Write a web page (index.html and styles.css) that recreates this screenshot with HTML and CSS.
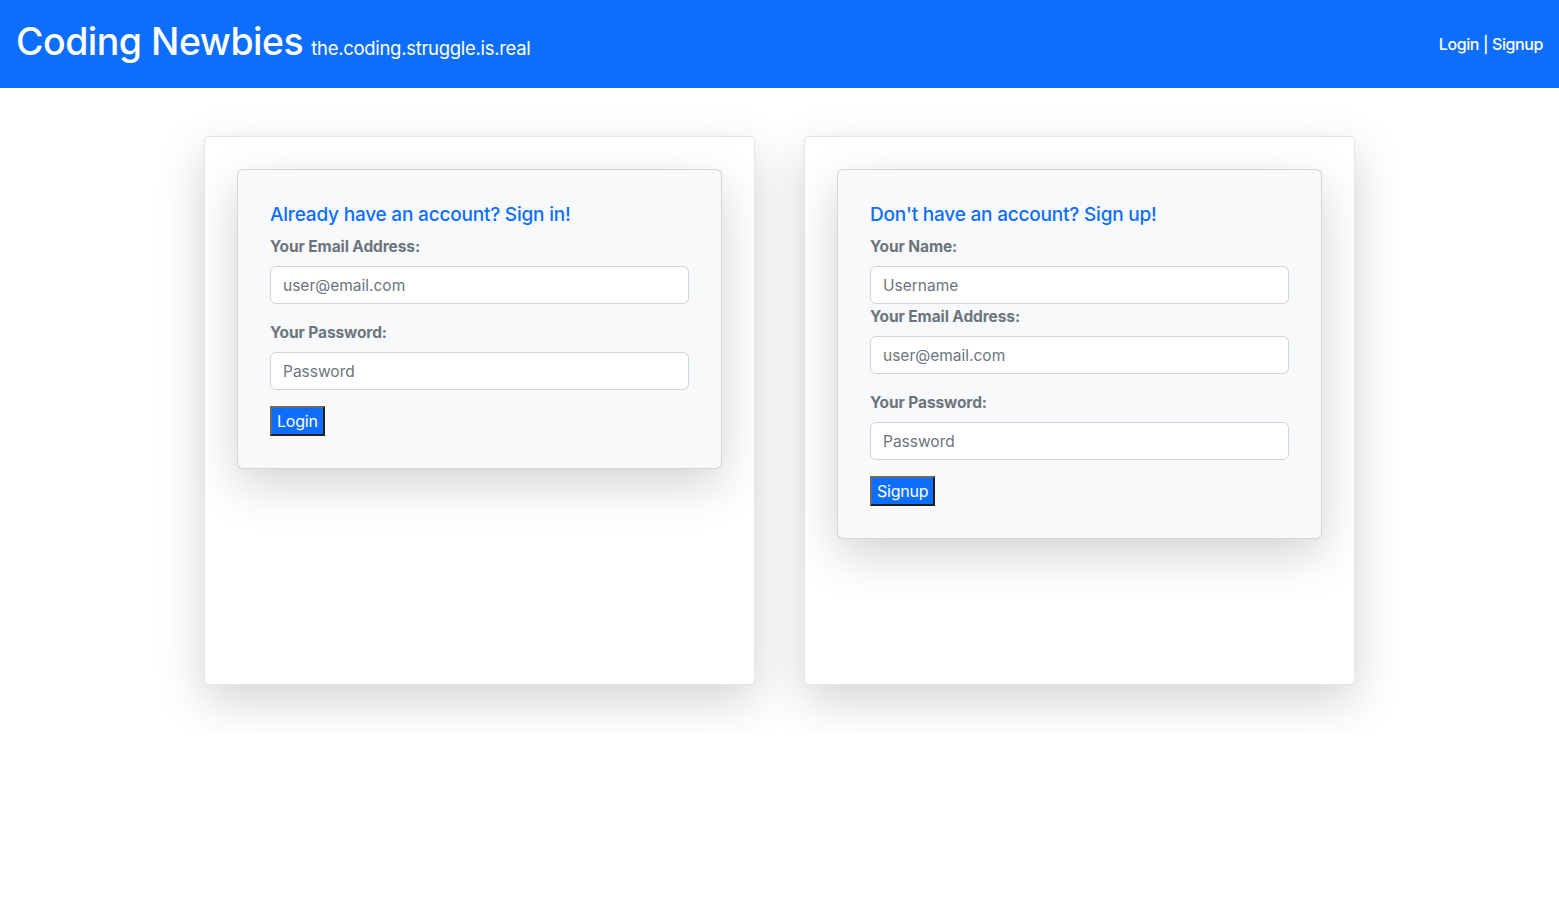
FILE: index.html
```html
<!DOCTYPE html>
<html lang="en">
<head>
<meta charset="utf-8">
<title>Coding Newbies</title>
<link rel="stylesheet" href="styles.css">
</head>
<body>
<header class="topbar">
  <div class="brand">
    <h1 class="brand-title">Coding Newbies</h1>
    <span class="brand-sub">the.coding.struggle.is.real</span>
  </div>
  <nav class="nav-links">
    <a href="#">Login</a> | <a href="#">Signup</a>
  </nav>
</header>
<main class="main">
  <div class="container">
    <section class="outer-card">
      <form class="inner-card">
        <h2 class="form-title">Already have an account? Sign in!</h2>
        <label class="label">Your Email Address:</label>
        <input class="input mb" type="email" placeholder="user@email.com">
        <label class="label">Your Password:</label>
        <input class="input mb" type="password" placeholder="Password">
        <button class="btn" type="button">Login</button>
      </form>
    </section>
    <section class="outer-card">
      <form class="inner-card">
        <h2 class="form-title">Don't have an account? Sign up!</h2>
        <label class="label">Your Name:</label>
        <input class="input" type="text" placeholder="Username">
        <label class="label">Your Email Address:</label>
        <input class="input mb" type="email" placeholder="user@email.com">
        <label class="label">Your Password:</label>
        <input class="input mb" type="password" placeholder="Password">
        <button class="btn" type="button">Signup</button>
      </form>
    </section>
  </div>
</main>
</body>
</html>
```
FILE: styles.css
```css
* { box-sizing: border-box; }
html, body { margin: 0; padding: 0; }
body {
  font-family: Inter, "Noto Sans", "Liberation Sans", sans-serif;
  font-size: 16px;
  line-height: 1.5;
  color: #212529;
  background: #fff;
}
.topbar {
  height: 88px;
  background: #0d6efd;
  color: #fff;
  display: flex;
  align-items: center;
  justify-content: space-between;
  padding: 0 16px;
}
.brand {
  display: flex;
  align-items: baseline;
  gap: 8px;
  margin-top: -6px;
}
.brand-title {
  margin: 0;
  font-size: 37.5px;
  font-weight: 500;
  line-height: 1.2;
  letter-spacing: -0.5px;
}
.brand-sub {
  font-size: 18.5px;
  font-weight: 400;
  letter-spacing: -0.3px;
}
.nav-links {
  font-size: 16px;
  font-weight: 500;
  letter-spacing: -0.4px;
  margin-top: -1px;
}
.nav-links a { color: #fff; text-decoration: none; }
.main {
  padding: 48px 0;
  overflow: hidden;
}
.container {
  width: 1151px;
  margin: 0 auto;
  display: flex;
  gap: 49px;
}
.outer-card {
  flex: 1;
  height: 549px;
  background: #fff;
  border: 1px solid rgba(0,0,0,0.1);
  border-radius: 5px;
  box-shadow: 0 16px 48px rgba(0,0,0,0.175);
  padding: 32px;
}
.inner-card {
  display: flex;
  flex-direction: column;
  align-items: flex-start;
  background: #f8f9fa;
  border: 1px solid rgba(0,0,0,0.15);
  border-radius: 6px;
  box-shadow: 0 16px 48px rgba(0,0,0,0.175);
  padding: 32px;
}
.form-title {
  margin: 1px 0 7px;
  font-size: 19px;
  font-weight: 500;
  line-height: 24px;
  color: #0d6efd;
  letter-spacing: -0.2px;
}
.label {
  font-weight: 700;
  color: #6c757d;
  font-size: 15.5px;
  line-height: 24px;
  padding-top: 1px;
  margin-bottom: 7px;
  letter-spacing: -0.1px;
}
.input {
  width: 100%;
  height: 38px;
  padding: 6px 12px;
  font: inherit;
  font-size: 15.5px;
  color: #212529;
  background: #fff;
  border: 1px solid #ced4da;
  border-radius: 6px;
  outline: none;
}
.input::placeholder { color: #6c757d; opacity: 1; }
.input.mb { margin-bottom: 16px; }
.btn {
  font: inherit;
  font-size: 16px;
  line-height: 22px;
  padding: 2px 5px;
  color: #fff;
  background: #0d6efd;
  border-style: solid;
  border-width: 2px;
  border-color: #6b6b6b #1e1e1e #1e1e1e #6b6b6b;
  border-radius: 0;
  letter-spacing: -0.2px;
}
```
